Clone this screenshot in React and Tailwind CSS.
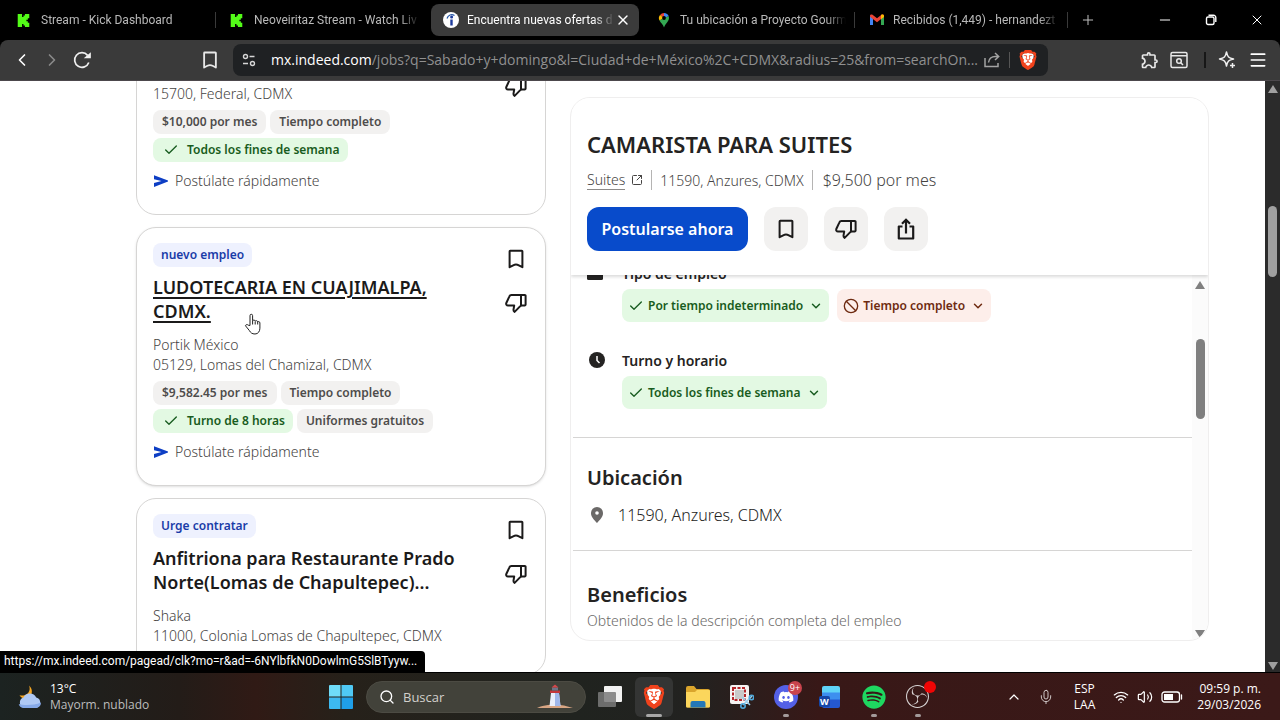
import React from "react";
import {
  Check,
  ChevronDown,
  ChevronLeft,
  ChevronRight,
  ChevronUp,
  Ban,
  Menu,
  Mic,
  Minus,
  Plus,
  Search,
  SquareArrowOutUpRight,
  Volume2,
  Wifi,
  X,
} from "lucide-react";
import { SiBrave, SiKick, SiObsstudio } from "react-icons/si";
import { FaDiscord, FaSpotify } from "react-icons/fa";
import { MdOutlineExtension } from "react-icons/md";

/* ---------- Icons ---------- */

const BookmarkIcon = ({ className = "size-6" }) => (
  <svg viewBox="0 0 24 24" className={className} fill="none" stroke="currentColor" strokeWidth="2" strokeLinejoin="round">
    <path d="M6.2 3.8h11.6a.6.6 0 0 1 .6.6v15.8l-3.6-1.9a6 6 0 0 0-5.6 0l-3.6 1.9V4.4a.6.6 0 0 1 .6-.6z" />
  </svg>
);

const ThumbDownIcon = () => (
  <svg viewBox="0 0 24 24" className="size-6" fill="none" stroke="currentColor" strokeWidth="2" strokeLinejoin="round">
    <path d="M17 4H7.4c-.9 0-1.7.5-2 1.3L2.3 12c-.5 1.300.3 2.600 1.700 2.600h6.200l-.7 4.100c-.1.9.3 1.700 1.100 2.200L17 14.400z" />
    <path d="M17 4h3.800a.8.8 0 0 1 .8.8v8.800a.8.8 0 0 1-.8.8H17" />
  </svg>
);

const ShareUpIcon = () => (
  <svg viewBox="0 0 24 24" className="size-6" fill="none" stroke="currentColor" strokeWidth="2.200">
    <path d="M8.500 9.500H4.800V21.500h14.400V9.500h-3.700" strokeLinejoin="round" />
    <path d="M12 16.500V3M8 6.800l4-4 4 4" />
  </svg>
);

const ApplyArrow = () => (
  <svg viewBox="0 0 16 14" className="h-3.5 w-4" fill="#0d3ec4">
    <path d="M1 1.200 15 6.600v.9L1 13V9l7.500-2L1 5.200z" />
  </svg>
);

const BraveLogo = ({ className = "size-5" }) => (
  <svg viewBox="0 0 24 24" className={className}>
    <path d="M12 2 19 5l-1 10-6 7-6-7L5 5z" fill="#fff" />
    <SiBrave size={24} color="#f0421c" />
  </svg>
);

const IndeedLogo = () => (
  <svg viewBox="0 0 16 16" className="size-4">
    <circle cx="8" cy="8" r="8" fill="#fff" />
    <path d="M4 6.500C5 3 8.500 1.500 11.500 3.500" fill="none" stroke="#2557a7" strokeWidth="1.200" />
    <circle cx="8.600" cy="5" r="1.500" fill="#1c3a9c" />
    <path d="M7.300 7.500h2.400v6H7.300z" fill="#1c3a9c" />
  </svg>
);

const MapsPin = () => (
  <svg viewBox="0 0 16 16" className="size-4">
    <path d="M8 1a5 5 0 0 0-3.900 1.900L8 6z" fill="#ea4335" />
    <path d="M8 1c2.300 0 4.200 1.300 4.800 3.200L8 6z" fill="#4285f4" />
    <path d="M4.100 2.900A5 5 0 0 0 3.500 8.500L8 6z" fill="#fbbc04" />
    <path d="M12.800 4.200C14 9 9.500 11 8 15.500 7.200 12.500 4.700 10.800 3.500 8.500L8 6z" fill="#34a853" />
    <circle cx="8" cy="6" r="1.900" fill="#000" />
  </svg>
);

const GmailLogo = () => (
  <svg viewBox="0 0 16 16" className="size-4">
    <path d="M1 4v9h3V6.500z" fill="#4285f4" />
    <path d="M15 4v9h-3V6.500z" fill="#34a853" />
    <path d="M1 3.800C1 2.500 2.500 2 3.500 2.700L8 6.200l4.500-3.500c1-.7 2.500-.2 2.500 1.100v1L8 10.200 1 4.800z" fill="#ea4335" />
    <path d="M12 3.100c1.500-1 3-.4 3 .9v1l-3 2.300z" fill="#fbbc04" />
  </svg>
);

const TuneIcon = () => (
  <svg viewBox="0 0 16 16" className="size-4 shrink-0" fill="none" stroke="#d6d6d6" strokeWidth="1.400">
    <circle cx="4.500" cy="4.500" r="2" />
    <path d="M8.500 4.500h5M2 11.500h5" />
    <circle cx="11.500" cy="11.500" r="2" />
  </svg>
);

const ReloadIcon = () => (
  <svg viewBox="0 0 20 20" className="size-5" fill="none" stroke="#f0f0f0" strokeWidth="1.700">
    <path d="M16.800 12.500A7.300 7.300 0 1 1 15.600 5.400" />
    <path d="M14 7.500h4V4z" fill="#f0f0f0" />
  </svg>
);

const ShareIcon = () => (
  <svg viewBox="0 0 18 18" className="size-[18px]" fill="none" stroke="#a3a3a3" strokeWidth="1.500">
    <path d="M2 7v8.500h13V12M5.500 11.500c.5-4 3-6 7-6h3M12 2l3.700 3.500L12 9" />
  </svg>
);

const FindWindowIcon = () => (
  <svg viewBox="0 0 18 18" className="size-[18px]" fill="none" stroke="#e8e8e8" strokeWidth="1.500">
    <rect x="1" y="1.500" width="16" height="15" rx="1.500" />
    <path d="M1 4.800h16M10.500 11.500l2.500 2.500" />
    <circle cx="9" cy="10" r="2.300" />
  </svg>
);

const SparkleIcon = () => (
  <svg viewBox="0 0 18 18" className="size-[18px]" fill="none" stroke="#f0f0f0" strokeWidth="1.500" strokeLinejoin="round">
    <path d="M8.500 1c.9 4.700 2.300 6.100 7 7-4.700.9-6.100 2.300-7 7-.9-4.700-2.300-6.100-7-7 4.700-.9 6.100-2.300 7-7z" />
    <path d="M14.500 12v5M12 14.500h5" />
  </svg>
);

const RestoreIcon = () => (
  <svg viewBox="0 0 12 12" className="size-3" fill="none" stroke="#fff" strokeWidth="1.400">
    <rect x="1.500" y="3" width="7.500" height="7.500" rx="1.500" />
    <path d="M3.500 1.200h5a2.300 2.300 0 0 1 2.300 2.300v4.500" />
  </svg>
);

const HandCursor = () => (
  <svg viewBox="0 0 18 22" className="h-[22px] w-[18px]" fill="#fff" stroke="#222" strokeWidth="1" strokeLinejoin="round">
    <path d="M6 12.500V2.600a1.300 1.300 0 0 1 2.600 0v5.200c.4-1.200 2.500-1 2.600.4.500-.9 2.300-.7 2.500.6.700-.6 2.200-.3 2.200 1.200v5.200c0 3-1.700 5.800-4.900 5.800-3 0-4.500-1.400-5.600-3.400L1.500 12.800c.3-1.500 1.900-1.600 2.700-.6z" />
    <path d="M8.600 8v3.500M11.200 8.500v3M13.700 9v2.500" fill="none" />
  </svg>
);

const WeatherIcon = () => (
  <svg viewBox="0 0 24 24" className="size-6">
    <path d="M11 .5c1.500 3.500.5 8-4 9.500-1.800.7-4 .8-5.500 0C3 13 6 14 9 13.500c5-1 7-9 2-13z" fill="#f5a623" />
    <path d="M6 23a5.500 5.500 0 0 1-.5-10.500 7 7 0 0 1 12.700 0A5.400 5.400 0 0 1 18 23z" fill="#aec8f4" />
    <path d="M6 23a5.500 5.500 0 0 1-5.300-4c5 1.500 15 1.500 22.300-1.500A5.400 5.400 0 0 1 18 23z" fill="#86a9e8" />
  </svg>
);

const WindowsLogo = () => (
  <svg viewBox="0 0 24 24" className="size-6">
    <path d="M0 1a1 1 0 0 1 1-1h10.500v11.500H0z" fill="#6fdcf8" />
    <path d="M12.500 0H23a1 1 0 0 1 1 1v10.500H12.500z" fill="#4fc9f5" />
    <path d="M0 12.500h11.500V24H1a1 1 0 0 1-1-1z" fill="#3db9f0" />
    <path d="M12.500 12.500H24V23a1 1 0 0 1-1 1H12.500z" fill="#1f9fe8" />
  </svg>
);

const Lighthouse = () => (
  <svg viewBox="0 0 36 26" className="h-[26px] w-9">
    <path d="M0 24c4-2 7-2.500 11-3 5-.6 12-.5 16 .5 3 .8 6 1.500 9 2.500z" fill="#d8a583" />
    <path d="M14 9h8l1.500 13h-11z" fill="#e9eefb" />
    <path d="M18 9h4l1.500 13H18z" fill="#9fb6ea" />
    <path d="M13 6.500h10V9H13z" fill="#c3363b" />
    <path d="M15 3.500h6v3h-6z" fill="#6d7488" />
    <path d="M14.500 3.500 18 .5l3.500 3z" fill="#d9474b" />
  </svg>
);

const TaskViewIcon = () => (
  <svg viewBox="0 0 24 24" className="size-6">
    <rect x="6" y="1" width="18" height="16" rx="1" fill="#f2f2f2" />
    <rect x="0" y="7" width="18" height="15" rx="1" fill="#7a7a7a" fillOpacity=".85" />
  </svg>
);

const FolderIcon = () => (
  <svg viewBox="0 0 24 24" className="size-6">
    <path d="M0 3a2 2 0 0 1 2-2h6l2.500 3H22a2 2 0 0 1 2 2v15a1.500 1.500 0 0 1-1.500 1.500h-21A1.500 1.500 0 0 1 0 21z" fill="#d9a52c" />
    <path d="M0 7h9l2-2h12a1 1 0 0 1 1 1v15a1.500 1.500 0 0 1-1.500 1.500h-21A1.500 1.500 0 0 1 0 21z" fill="#fbd65c" />
    <path d="M4.500 22.500V18a2 2 0 0 1 2-2h11a2 2 0 0 1 2 2v4.500z" fill="#2478b8" />
  </svg>
);

const SnipIcon = () => (
  <svg viewBox="0 0 24 24" className="size-6">
    <rect x="0" y="0" width="19" height="19" rx="2" fill="#f5f3f3" />
    <rect x="3" y="3" width="12" height="12" fill="none" stroke="#b3262b" strokeWidth="2" strokeDasharray="3 1.500" />
    <rect x="5" y="5" width="9" height="9" fill="#c9c9c9" />
    <path d="M13 20 22 11M12 12l8 8" stroke="#9bd0ee" strokeWidth="1.600" />
    <circle cx="13" cy="21" r="2.200" fill="none" stroke="#4fa9dc" strokeWidth="1.600" />
    <circle cx="21.500" cy="12.500" r="2.200" fill="none" stroke="#4fa9dc" strokeWidth="1.600" />
  </svg>
);

const WordIcon = () => (
  <span className="relative block size-6">
    <svg viewBox="0 0 24 24" className="size-6">
      <path d="M4 3a2 2 0 0 1 2-2h14a2 2 0 0 1 2 2v5H4z" fill="#5fd3f7" />
      <path d="M4 7.500h18V15H4z" fill="#3d8fef" />
      <path d="M4 14.500h18V21a2 2 0 0 1-2 2H6a2 2 0 0 1-2-2z" fill="#2458d0" />
      <rect x="1" y="11" width="11" height="11" rx="2" fill="#1647a8" />
    </svg>
    <span className="absolute bottom-0.5 left-0.5 text-[9px] leading-[11px] font-bold text-white">W</span>
  </span>
);

const DiscordIcon = () => (
  <span className="relative flex size-6 items-center justify-center rounded-full bg-[#5460e6]">
    <FaDiscord size={16} color="#fff" />
    <span className="absolute -top-1 -right-1 flex size-3.5 items-center justify-center rounded-full bg-[#c9444d] text-[9px] leading-3 text-white">
      9+
    </span>
  </span>
);

const ObsIcon = () => (
  <span className="relative block size-6">
    <SiObsstudio size={23} color="#d8d4d4" />
    <span className="absolute -top-1 -right-1.5 size-3 rounded-full bg-[#f00505]" />
  </span>
);

const BatteryIcon = () => (
  <svg viewBox="0 0 22 12" className="h-3 w-[22px]" fill="none" stroke="#fff" strokeWidth="1.300">
    <rect x="1" y="1" width="17.500" height="10" rx="2.500" />
    <path d="M3 3h9v6H3z" fill="#fff" stroke="none" />
    <path d="M20.500 4v4" strokeLinecap="round" />
  </svg>
);

/* ---------- Browser chrome ---------- */

const tabs = [
  { title: "Stream - Kick Dashboard", icon: <SiKick size={13} color="#53fc18" /> },
  { title: "Neoveiritaz Stream - Watch Liv", icon: <SiKick size={13} color="#53fc18" /> },
  { title: "Encuentra nuevas ofertas d", icon: <IndeedLogo />, active: true },
  { title: "Tu ubicación a Proyecto Gourm", icon: <MapsPin /> },
  { title: "Recibidos (1,449) - hernandezt", icon: <GmailLogo /> },
];

const TabStrip = () => (
  <header className="flex h-10 shrink-0 items-center bg-black pl-[5px]">
    {tabs.map((tab, i) => (
      <React.Fragment key={tab.title}>
        <div
          className={
            tab.active
              ? "flex h-8 w-52 items-center rounded-lg bg-[#3b3b3b] pr-2 pl-3"
              : "flex h-8 w-52 items-center pr-1.5 pl-3"
          }
        >
          <button className="flex min-w-0 flex-1 items-center gap-2">
            <span className="flex w-4 shrink-0">{tab.icon}</span>
            <span
              className={
                tab.active
                  ? "flex-1 overflow-hidden mask-r-from-85% text-left font-[Roboto,sans-serif] text-[12px] leading-4 whitespace-nowrap text-white"
                  : "flex-1 overflow-hidden mask-r-from-88% text-left font-[Roboto,sans-serif] text-[12px] leading-4 whitespace-nowrap text-[#b9b9b9]"
              }
            >
              {tab.title}
            </span>
          </button>
          {tab.active && (
            <button aria-label="Cerrar pestaña" className="text-white">
              <X className="size-4" strokeWidth={2} />
            </button>
          )}
        </div>
        <span
          className={
            tab.active || tabs[i + 1]?.active ? "mx-0.5 h-4 w-px" : "mx-0.5 h-4 w-px bg-[#3a3a3a]"
          }
        />
      </React.Fragment>
    ))}
    <button aria-label="Nueva pestaña" className="ml-2.5 text-[#c0c0c0]">
      <Plus className="size-4" strokeWidth={1.5} />
    </button>
    <div className="ml-auto flex text-white">
      <button aria-label="Minimizar" className="flex w-[46px] justify-center">
        <Minus className="size-4" strokeWidth={1.5} />
      </button>
      <button aria-label="Restaurar" className="flex w-[46px] items-center justify-center">
        <RestoreIcon />
      </button>
      <button aria-label="Cerrar" className="flex w-[46px] justify-center">
        <X className="size-4" strokeWidth={1.5} />
      </button>
    </div>
  </header>
);

const Toolbar = () => (
  <div className="shrink-0 bg-black">
    <nav className="flex h-[41px] items-center rounded-t-lg border-b border-[#4c484c] bg-[#3a3a3a]">
      <div className="flex w-[233px] shrink-0 items-center pr-3 pl-3">
        <button aria-label="Atrás" className="text-white">
          <ChevronLeft className="size-5" strokeWidth={2} />
        </button>
        <button aria-label="Adelante" className="ml-2.5 text-[#8a8a8a]">
          <ChevronRight className="size-5" strokeWidth={2} />
        </button>
        <button aria-label="Recargar" className="ml-2.5">
          <ReloadIcon />
        </button>
        <button aria-label="Guardar" className="ml-auto text-[#e8e8e8]">
          <BookmarkIcon className="size-[22px]" />
        </button>
      </div>
      <div className="flex h-8 min-w-0 flex-1 items-center rounded-lg bg-[#1f2123] pr-2.5 pl-2">
        <TuneIcon />
        <label htmlFor="url-path" className="ml-3.5 text-[14px] leading-5 text-white">
          mx.indeed.com
        </label>
        <input
          id="url-path"
          readOnly
          value="/jobs?q=Sabado+y+domingo&l=Ciudad+de+México%2C+CDMX&radius=25&from=searchOn..."
          className="min-w-0 flex-1 text-[14px] leading-5 text-[#909090] outline-none"
        />
        <button aria-label="Compartir">
          <ShareIcon />
        </button>
        <span className="mx-2 h-4 w-px bg-[#555]" />
        <button aria-label="Brave Shields">
          <BraveLogo />
        </button>
      </div>
      <div className="flex w-[232px] shrink-0 items-center justify-end pr-3">
        <button aria-label="Extensiones" className="text-[#e8e8e8]">
          <MdOutlineExtension size={20} />
        </button>
        <button aria-label="Buscar pestañas" className="ml-2.5">
          <FindWindowIcon />
        </button>
        <span className="mr-3 ml-4 h-4 w-0.5 bg-[#171717]" />
        <button aria-label="Leo AI">
          <SparkleIcon />
        </button>
        <button aria-label="Menú" className="ml-3 text-white">
          <Menu className="size-5" strokeWidth={2} />
        </button>
      </div>
    </nav>
  </div>
);

/* ---------- Job list ---------- */

const jobs = [
  {
    id: 1,
    location: "15700, Federal, CDMX",
    tags: [
      { label: "$10,000 por mes" },
      { label: "Tiempo completo" },
      { label: "Todos los fines de semana", match: true },
    ],
    quickApply: true,
  },
  {
    id: 2,
    badge: "nuevo empleo",
    title: "LUDOTECARIA EN CUAJIMALPA, CDMX.",
    hovered: true,
    company: "Portik México",
    location: "05129, Lomas del Chamizal, CDMX",
    tags: [
      { label: "$9,582.45 por mes" },
      { label: "Tiempo completo" },
      { label: "Turno de 8 horas", match: true },
      { label: "Uniformes gratuitos" },
    ],
    quickApply: true,
  },
  {
    id: 3,
    badge: "Urge contratar",
    title: "Anfitriona para Restaurante Prado Norte(Lomas de Chapultepec)...",
    company: "Shaka",
    location: "11000, Colonia Lomas de Chapultepec, CDMX",
    tags: [],
  },
];

const Tag = ({ tag }) =>
  tag.match ? (
    <li className="flex h-6 items-center gap-2 rounded-lg bg-[#e3f9e3] px-2 text-[12px] font-semibold text-[#185c20]">
      <Check className="ml-0.5 size-4" strokeWidth={2} />
      {tag.label}
    </li>
  ) : (
    <li className="flex h-6 items-center rounded-lg bg-[#f2f1f0] px-[9px] text-[12px] font-semibold text-[#4e4c4b]">
      {tag.label}
    </li>
  );

const JobCard = ({ job }) => (
  <article
    className={
      job.hovered
        ? "relative flex rounded-[20px] border border-[#d6d5d4] bg-white px-4 pt-[15px] pb-[22px] shadow-sm"
        : "flex rounded-[20px] border border-[#d6d5d4] bg-white px-4 pt-[15px] pb-[22px]"
    }
  >
    <div className="min-w-0 flex-1">
      {job.badge && (
        <span className="flex h-6 w-fit items-center rounded-lg bg-[#eef1fe] px-2 text-[12px] font-semibold text-[#1a3ca8]">
          {job.badge}
        </span>
      )}
      {job.title && (
        <h2 className="mt-2 mb-3 w-[310px] text-[18px] leading-6 font-semibold text-[#1b1a1a]">
          <a href="#empleo" className={job.hovered ? "underline decoration-2 underline-offset-3" : ""}>
            {job.title}
          </a>
        </h2>
      )}
      {job.company && <p className="text-[14px] leading-5 font-light text-[#454342]">{job.company}</p>}
      {/* Scrolled-out heading leaves only the location line */}
      <p
        className={
          job.title
            ? "text-[14px] leading-5 font-light whitespace-nowrap text-[#454342]"
            : "pt-[57px] text-[14px] leading-5 font-light whitespace-nowrap text-[#454342]"
        }
      >
        {job.location}
      </p>
      <ul className="mt-1.5 flex w-[300px] flex-wrap gap-1">
        {job.tags.map((tag) => (
          <Tag key={tag.label} tag={tag} />
        ))}
      </ul>
      {job.quickApply && (
        <p className="mt-2 flex items-center gap-1.5 text-[14px] leading-[22px] font-light text-[#454342]">
          <ApplyArrow />
          Postúlate rápidamente
        </p>
      )}
    </div>
    <div className="flex flex-col items-center gap-5 px-px pt-1 text-[#1b1a1a]">
      <button aria-label="Guardar empleo">
        <BookmarkIcon />
      </button>
      <button aria-label="No me interesa">
        <ThumbDownIcon />
      </button>
    </div>
    {job.hovered && (
      <span className="absolute top-[85px] left-[107px]">
        <HandCursor />
      </span>
    )}
  </article>
);

/* ---------- Job detail ---------- */

const FilterChip = ({ label, excluded }) => (
  <button
    className={
      excluded
        ? "flex h-[33px] items-center gap-1 rounded-lg bg-[#fdeeea] px-1.5 text-[12px] font-semibold text-[#6e2a10]"
        : "flex h-[33px] items-center gap-1 rounded-lg bg-[#e3f9e3] px-1.5 text-[12px] font-semibold text-[#185c20]"
    }
  >
    {excluded ? <Ban className="size-4" strokeWidth={2} /> : <Check className="size-4" strokeWidth={2} />}
    {label}
    <ChevronDown className="ml-0.5 size-3.5" strokeWidth={2.5} />
  </button>
);

const ScrollArrow = ({ down, className }) => (
  <svg viewBox="0 0 10 8" className={className}>
    <path d={down ? "M0 0h10L5 8z" : "M0 8h10L5 0z"} fill="currentColor" />
  </svg>
);

const JobDetail = () => (
  <section className="mt-4 mb-[31px] flex min-h-0 flex-col overflow-hidden rounded-[20px] border border-[#efeeee] bg-white">
    <div className="relative z-10 bg-white px-4 pt-[34px] pb-6 shadow-[0_2px_3px_rgba(0,0,0,0.14)]">
      <h1 className="text-[22px] leading-6 font-semibold text-[#242322]">CAMARISTA PARA SUITES</h1>
      <div className="mt-[13px] flex h-[22px] items-center text-[14px] font-light text-[#454342]">
        <a href="#suites" className="flex items-center gap-1.5">
          <span className="border-b border-[#8c8a89] leading-[18px]">Suites</span>
          <SquareArrowOutUpRight className="size-3" strokeWidth={2} />
        </a>
        <span className="mx-2 h-5 w-px bg-[#b5b4b3]" />
        <span>11590, Anzures, CDMX</span>
        <span className="mr-2.5 ml-2 h-5 w-px bg-[#b5b4b3]" />
        <span className="text-[16px]">$9,500 por mes</span>
      </div>
      <div className="mt-4 flex gap-4 text-[#1b1a1a]">
        <button className="h-11 w-[161px] rounded-xl bg-[#084bcb] text-[16px] font-semibold text-white">
          Postularse ahora
        </button>
        <button aria-label="Guardar" className="flex size-11 items-center justify-center rounded-xl bg-[#f2f1f0]">
          <BookmarkIcon />
        </button>
        <button aria-label="No me interesa" className="flex size-11 items-center justify-center rounded-xl bg-[#f2f1f0]">
          <ThumbDownIcon />
        </button>
        <button aria-label="Compartir" className="flex size-11 items-center justify-center rounded-xl bg-[#f2f1f0]">
          <ShareUpIcon />
        </button>
      </div>
    </div>

    <div className="flex min-h-0 flex-1">
      <div className="min-w-0 flex-1 overflow-hidden pl-0.5">
        {/* Scrolled so the first heading sits half under the header */}
        <div className="-mt-3 grid grid-cols-[35px_1fr] px-3.5 pb-7 text-[#242322]">
          <svg viewBox="0 0 16 16" className="mt-0.5 size-4">
            <rect y="3" width="16" height="12" rx="1.500" fill="currentColor" />
          </svg>
          <div>
            <h3 className="text-[14px] leading-[22px] font-semibold">Tipo de empleo</h3>
            <div className="mt-1 flex gap-2">
              <FilterChip label="Por tiempo indeterminado" />
              <FilterChip label="Tiempo completo" excluded />
            </div>
          </div>
          <svg viewBox="0 0 16 16" className="mt-[30px] ml-0.5 size-4">
            <circle cx="8" cy="8" r="8" fill="currentColor" />
            <path d="M8 4v4.500l2.500 2.500" fill="none" stroke="#fff" strokeWidth="1.500" />
          </svg>
          <div className="mt-7">
            <h3 className="text-[14px] leading-[22px] font-semibold">Turno y horario</h3>
            <div className="mt-1 flex">
              <FilterChip label="Todos los fines de semana" />
            </div>
          </div>
        </div>
        <div className="border-t border-[#d6d5d4] px-3.5 pt-7 pb-[23px]">
          <h2 className="text-[20px] leading-6 font-semibold text-[#242322]">Ubicación</h2>
          <p className="mt-[13px] flex items-center gap-[13px] text-[16px] leading-6 font-light text-[#242322]">
            <svg viewBox="0 0 16 16" className="ml-0.5 size-4">
              <path d="M8 0a6 6 0 0 0-6 6.200C2 10 5.500 13 8 16c2.500-3 6-6 6-9.800A6 6 0 0 0 8 0z" fill="#6b6968" />
              <circle cx="8" cy="6" r="1.800" fill="#fff" />
            </svg>
            11590, Anzures, CDMX
          </p>
        </div>
        <div className="border-t border-[#d6d5d4] px-3.5 pt-8">
          <h2 className="text-[20px] leading-6 font-semibold text-[#242322]">Beneficios</h2>
          <p className="mt-1 text-[14px] leading-5 font-light text-[#6b6968]">
            Obtenidos de la descripción completa del empleo
          </p>
        </div>
      </div>
      <div className="flex w-4 flex-col items-center bg-[#fbfbfb] pt-1.5 pb-0.5 text-[#808080]">
        <ScrollArrow className="h-2 w-2.5" />
        <span className="mt-[50px] h-20 w-[9px] rounded-full bg-[#7f7f7f]" />
        <ScrollArrow down className="mt-auto h-2 w-2.5" />
      </div>
    </div>
  </section>
);

/* ---------- Taskbar ---------- */

const apps = [
  { name: "Vista de tareas", icon: <TaskViewIcon /> },
  { name: "Brave", icon: <BraveLogo className="size-6" />, state: "active" },
  { name: "Explorador de archivos", icon: <FolderIcon /> },
  { name: "Recortes", icon: <SnipIcon /> },
  { name: "Discord", icon: <DiscordIcon />, state: "open" },
  { name: "Word", icon: <WordIcon /> },
  { name: "Spotify", icon: <FaSpotify size={24} color="#1ed760" />, state: "open" },
  { name: "OBS Studio", icon: <ObsIcon />, state: "open" },
];

const Taskbar = () => (
  <footer className="flex h-12 shrink-0 items-center border-t border-black bg-[linear-gradient(to_right,#1c2321_0%,#231c18_14%,#301a15_20%,#26211a_27%,#20231f_45%,#222220_54%,#381817_64%,#3b1918_100%)] text-white">
    <div className="flex w-[319px] shrink-0 items-center gap-2 pl-[18px]">
      <WeatherIcon />
      <div className="text-[12px] leading-4">
        <p>13°C</p>
        <p className="text-[#bdbdbd]">Mayorm. nublado</p>
      </div>
    </div>
    <button aria-label="Inicio" className="flex w-11 shrink-0 justify-center">
      <WindowsLogo />
    </button>
    <label className="mr-0.5 ml-[3px] flex h-8 w-[220px] items-center rounded-full border border-[#4c4b43] bg-[#42423a] px-3">
      <Search className="size-4 shrink-0" strokeWidth={2} />
      <input
        aria-label="Buscar"
        placeholder="Buscar"
        className="ml-2 min-w-0 flex-1 text-[13px] leading-5 outline-none placeholder:text-[#d2d0cc]"
      />
      <Lighthouse />
    </label>
    {apps.map((app) => (
      <button
        key={app.name}
        aria-label={app.name}
        className="relative flex h-10 w-11 shrink-0 items-center justify-center"
      >
        <span
          className={
            app.state === "active"
              ? "flex h-10 w-[38px] items-center justify-center rounded-md bg-[#343534]"
              : "flex h-10 w-[38px] items-center justify-center"
          }
        >
          {app.icon}
        </span>
        {app.state && (
          <span
            className={
              app.state === "active"
                ? "absolute bottom-0 h-[3px] w-4 rounded-full bg-[#a8a8a8]"
                : "absolute bottom-0 h-[3px] w-1.5 rounded-full bg-[#a39a9a]"
            }
          />
        )}
      </button>
    ))}
    <div className="ml-auto flex items-center pr-[19px] text-[12px] leading-4">
      <ChevronUp className="size-4" strokeWidth={1.8} />
      <Mic className="ml-4 size-4 text-[#cfc7c7]" strokeWidth={1.5} />
      <p className="ml-5 text-center">
        ESP
        <br />
        LAA
      </p>
      <Wifi className="ml-[18px] size-4" strokeWidth={2} />
      <Volume2 className="ml-2 size-4" strokeWidth={1.8} />
      <span className="ml-2">
        <BatteryIcon />
      </span>
      <p className="ml-3.5 text-right">
        09:59 p. m.
        <br />
        29/03/2026
      </p>
    </div>
  </footer>
);

const App = () => {
  return (
    <div className="flex h-screen flex-col overflow-hidden font-['Open_Sans',sans-serif]">
      <TabStrip />
      <Toolbar />
      <div className="relative flex min-h-0 flex-1 bg-white">
        <main className="grid min-w-0 flex-1 grid-cols-[410px_1fr] grid-rows-[100%] gap-6 overflow-hidden pr-14 pl-[136px] font-['Noto_Sans',sans-serif]">
          <div className="-mt-[70px] flex flex-col gap-3">
            {jobs.map((job) => (
              <JobCard key={job.id} job={job} />
            ))}
          </div>
          <JobDetail />
        </main>
        <div className="flex w-[15px] flex-col items-center bg-[#2b2b2b] pt-1 pb-0.5 text-[#a0a0a0]">
          <ScrollArrow className="h-2 w-2.5" />
          <span className="mt-[113px] h-[71px] w-[9px] rounded-full bg-[#a0a0a0]" />
          <ScrollArrow down className="mt-auto h-2 w-2.5" />
        </div>
        <p className="absolute bottom-0 left-0 min-w-[425px] rounded-tr bg-black px-1 font-[Roboto,sans-serif] text-[12px] leading-[21px] whitespace-nowrap text-white">
          https://mx.indeed.com/pagead/clk?mo=r&ad=-6NYlbfkN0DowlmG5SlBTyyw...
        </p>
      </div>
      <Taskbar />
    </div>
  );
};

export default App;
